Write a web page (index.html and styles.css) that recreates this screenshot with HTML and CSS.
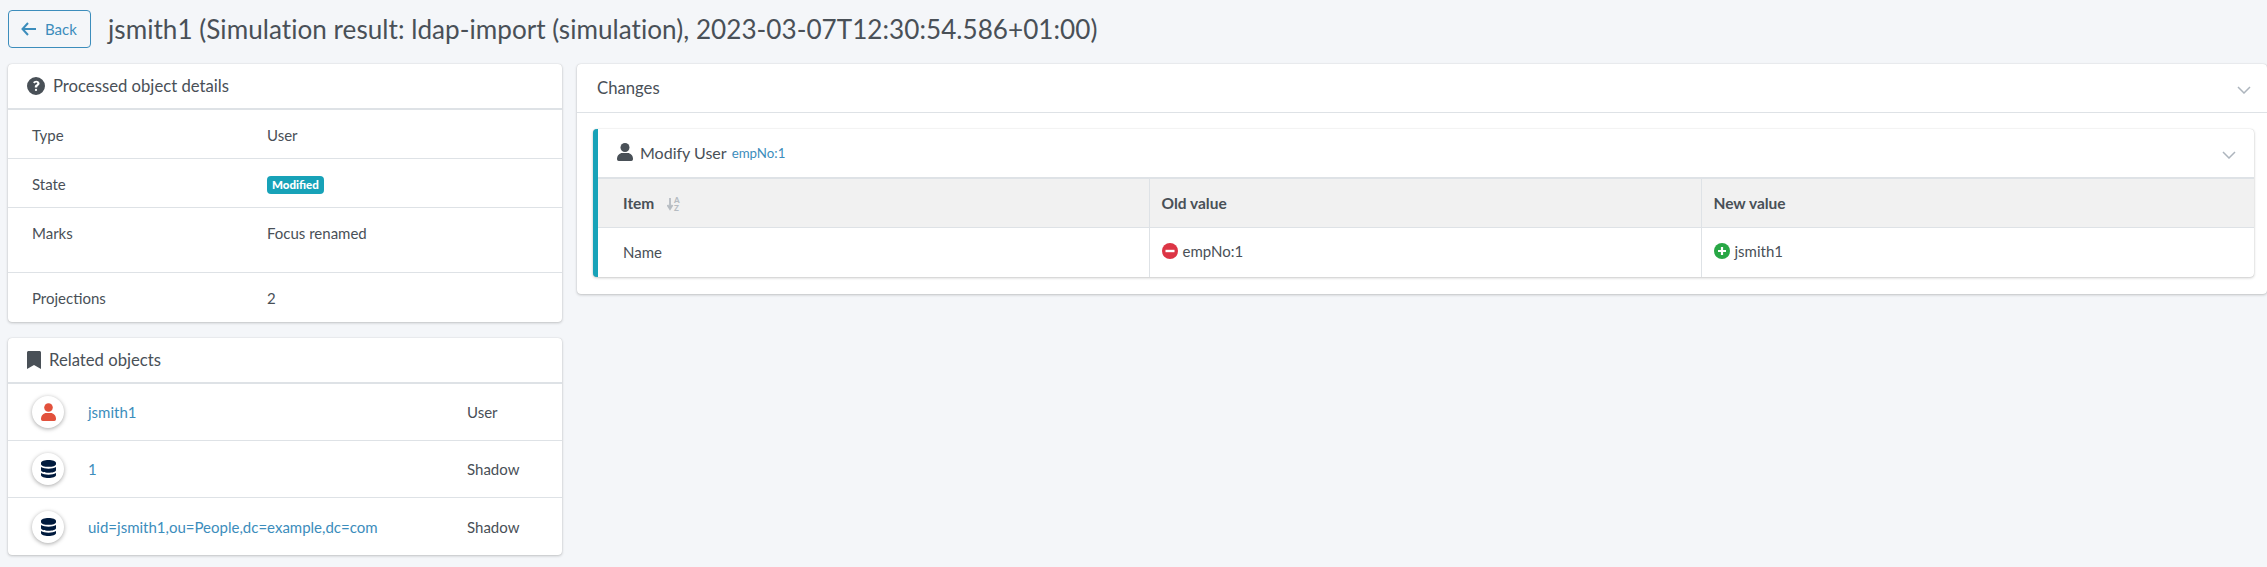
FILE: index.html
```html
<!DOCTYPE html>
<html lang="en">
<head>
<meta charset="UTF-8" />
<title>jsmith1 (Simulation result)</title>
<link rel="stylesheet" href="styles.css">
</head>
<body>
  <header class="page-head">
    <button class="back-btn" type="button">
      <svg class="back-arrow" viewBox="0 0 16 14"><path d="M7 1 1.5 7 7 13M2 7h13" /></svg>
      Back
    </button>
    <h1>jsmith1 (Simulation result: ldap-import (simulation), 2023-03-07T12:30:54.586+01:00)</h1>
  </header>

  <main class="layout">
    <div class="left-col">
      <section class="card">
        <div class="card-head thick">
          <svg class="icon" width="18" height="18" viewBox="0 0 512 512"><path d="M256 0a256 256 0 1 0 0 512 256 256 0 0 0 0-512zm0 400a32 32 0 1 1 0-64 32 32 0 0 1 0 64zm34-112v8h-68v-20c0-34 24-50 44-62 16-10 26-16 26-30 0-16-14-26-32-26-20 0-32 10-42 26l-44-28c18-32 48-52 88-52 48 0 96 32 96 82 0 60-68 66-68 102z" /></svg>
          Processed object details
        </div>
        <div class="detail-row"><span class="detail-key">Type</span><span>User</span></div>
        <div class="detail-row"><span class="detail-key">State</span><span class="badge">Modified</span></div>
        <div class="detail-row tall"><span class="detail-key">Marks</span><span>Focus renamed</span></div>
        <div class="detail-row last"><span class="detail-key">Projections</span><span>2</span></div>
      </section>

      <section class="card">
        <div class="card-head thick">
          <svg class="icon" width="14" height="18" viewBox="0 0 14 18"><path d="M0 1.5C0 .7.7 0 1.500 0h11c.8 0 1.500.7 1.500 1.500V18l-7-4-7 4z" /></svg>
          Related objects
        </div>
        <div class="related-row">
          <span class="avatar user">
            <svg width="15" height="18" viewBox="0 0 15 18"><circle cx="7.500" cy="4.500" r="4.300" /><path d="M0 16c0-3.500 2.500-6 5.500-6h4c3 0 5.500 2.500 5.500 6 0 1-.7 2-1.700 2H1.700C.7 18 0 17 0 16z" /></svg>
          </span>
          <a class="link">jsmith1</a>
          <span class="related-type">User</span>
        </div>
        <div class="related-row">
          <span class="avatar">
            <svg width="15" height="18" viewBox="0 0 15 18"><path d="M0 3c0-2 3.500-3 7.500-3S15 1 15 3v1c0 2-3.500 2.800-7.500 2.800S0 6 0 4zM0 7c2 1.300 4.500 1.700 7.500 1.700S13 8.300 15 7v3c0 1.800-3.500 2.800-7.500 2.800S0 11.800 0 10zM0 13c2 1.300 4.500 1.700 7.500 1.700S13 14.300 15 13v2c0 2-3.500 3-7.500 3S0 17 0 15z" /></svg>
          </span>
          <a class="link">1</a>
          <span class="related-type">Shadow</span>
        </div>
        <div class="related-row last">
          <span class="avatar">
            <svg width="15" height="18" viewBox="0 0 15 18"><path d="M0 3c0-2 3.500-3 7.500-3S15 1 15 3v1c0 2-3.500 2.800-7.500 2.800S0 6 0 4zM0 7c2 1.300 4.500 1.700 7.500 1.700S13 8.300 15 7v3c0 1.800-3.500 2.800-7.500 2.800S0 11.800 0 10zM0 13c2 1.300 4.500 1.700 7.500 1.700S13 14.300 15 13v2c0 2-3.500 3-7.500 3S0 17 0 15z" /></svg>
          </span>
          <a class="link">uid=jsmith1,ou=People,dc=example,dc=com</a>
          <span class="related-type">Shadow</span>
        </div>
      </section>
    </div>

    <section class="card changes">
      <div class="changes-head">
        Changes
        <svg class="chevron" width="14" height="8" viewBox="0 0 14 8"><path d="M1 1l6 6 6-6" /></svg>
      </div>
      <div class="changes-body">
        <div class="delta">
          <div class="delta-head">
            <svg class="icon" width="16" height="18" viewBox="0 0 16 18"><circle cx="8" cy="4.500" r="4.500" /><path d="M0 16c0-3.500 2.500-6 5.500-6h5c3 0 5.500 2.500 5.500 6 0 1-.7 2-1.700 2H1.700C.7 18 0 17 0 16z" /></svg>
            Modify User <a class="link small">empNo:1</a>
            <svg class="chevron" width="14" height="8" viewBox="0 0 14 8"><path d="M1 1l6 6 6-6" /></svg>
          </div>
          <table class="delta-table">
            <thead>
              <tr>
                <th class="col-item">Item
                  <svg class="sort" width="14" height="14" viewBox="0 0 14 14"><path d="M3 1v9M.5 8 3 12l2.500-4" /><text x="7" y="6" class="sort-a">A</text><text x="7" y="13.500" class="sort-a">Z</text></svg>
                </th>
                <th class="col-old">Old value</th>
                <th>New value</th>
              </tr>
            </thead>
            <tbody>
              <tr>
                <td>Name</td>
                <td><span class="change-val">
                  <svg width="16" height="16" viewBox="0 0 16 16"><circle cx="8" cy="8" r="8" fill="#dc3545" /><rect x="3.500" y="6.800" width="9" height="2.400" fill="#fff" /></svg>
                  empNo:1</span></td>
                <td><span class="change-val">
                  <svg width="16" height="16" viewBox="0 0 16 16"><circle cx="8" cy="8" r="8" fill="#28a745" /><path d="M4 8h8M8 4v8" stroke="#fff" stroke-width="2.200" /></svg>
                  jsmith1</span></td>
              </tr>
            </tbody>
          </table>
        </div>
      </div>
    </section>
  </main>
</body>
</html>
```
FILE: styles.css
```css
html, body {
  margin: 0;
  padding: 0;
  overflow: hidden;
}

* {
  box-sizing: border-box;
}

body {
  font-family: Lato, "Noto Sans", sans-serif;
  font-size: 15px;
  color: #495057;
  background-color: #f4f6f9;
  height: 567px;
}

.page-head {
  display: flex;
  align-items: flex-start;
  gap: 17px;
  padding: 10px 0 0 8px;
  height: 64px;
}

.page-head h1 {
  margin: 0;
  font-size: 26.1px;
  font-weight: 400;
  letter-spacing: .035px;
  line-height: 38px;
  white-space: nowrap;
}

.back-btn {
  display: flex;
  align-items: center;
  gap: 8px;
  width: 83px;
  height: 38px;
  padding: 0 0 0 12px;
  font: inherit;
  color: #3c8dbc;
  background: transparent;
  border: 1px solid #3c8dbc;
  border-radius: 4px;
}

.back-arrow {
  width: 16px;
  height: 14px;
  fill: none;
  stroke: #3c8dbc;
  stroke-width: 2;
}

.layout {
  display: grid;
  grid-template-columns: 554px 1fr;
  column-gap: 15px;
  padding-left: 8px;
  align-items: start;
}

.left-col {
  display: flex;
  flex-direction: column;
  gap: 16px;
}

.card {
  background-color: #fff;
  border-radius: 4px;
  box-shadow: 0 0 1px rgba(0, 0, 0, .2), 0 1px 3px rgba(0, 0, 0, .2);
}

.card-head {
  display: flex;
  align-items: center;
  gap: 8px;
  height: 46px;
  padding: 0 19px;
  font-size: 16.7px;
}

.card-head.thick {
  border-bottom: 2px solid #dee2e6;
}

.icon {
  fill: #495057;
  flex: none;
}

.detail-row {
  display: flex;
  align-items: flex-start;
  height: 49px;
  padding-top: 15px;
  line-height: 20px;
  border-bottom: 1px solid #dee2e6;
}

.detail-row.tall {
  height: 65px;
}

.detail-row.last {
  border-bottom: none;
}

.detail-key {
  width: 259px;
  padding-left: 24px;
  flex: none;
}

.badge {
  margin-top: 2px;
  padding: 0 5px;
  font-size: 11.5px;
  font-weight: 900;
  line-height: 18px;
  color: #fff;
  background-color: #17a2b8;
  border-radius: 4px;
}

.related-row {
  display: flex;
  align-items: center;
  height: 57px;
  padding-left: 24px;
  border-bottom: 1px solid #dee2e6;
}

.related-row.last {
  border-bottom: none;
}

.avatar {
  display: flex;
  align-items: center;
  justify-content: center;
  width: 32px;
  height: 32px;
  flex: none;
  border-radius: 50%;
  background-color: #fff;
  box-shadow: 0 1px 4px rgba(0, 0, 0, .35);
  fill: #001a3d;
}

.avatar.user {
  fill: #e2513c;
}

.link {
  color: #3c8dbc;
}

.related-row .link {
  width: 379px;
  margin-left: 24px;
  flex: none;
}

.related-type {
  white-space: nowrap;
}

.changes {
  height: 230px;
}

.changes-head {
  display: flex;
  align-items: center;
  justify-content: space-between;
  height: 49px;
  padding: 0 16px 0 20px;
  font-size: 16.7px;
  border-bottom: 1px solid #dee2e6;
}

.chevron {
  margin-top: 4px;
  fill: none;
  stroke: #adb5bd;
  stroke-width: 1.500;
  flex: none;
}

.changes-body {
  padding: 16px 13px 0 16px;
}

.delta {
  background-color: #fff;
  border-left: 5px solid #17a2b8;
  border-radius: 4px;
  box-shadow: 0 0 1px rgba(0, 0, 0, .2), 0 1px 3px rgba(0, 0, 0, .2);
  overflow: hidden;
}

.delta-head {
  display: flex;
  align-items: center;
  gap: 6px;
  height: 50px;
  padding: 0 18px 2px 19px;
  font-size: 16px;
  border-bottom: 2px solid #dee2e6;
}

.delta-head .icon {
  margin-right: 1px;
}

.delta-head .chevron {
  margin-left: auto;
  margin-top: 6px;
}

.small {
  font-size: 13.3px;
  margin-top: 2px;
  margin-left: -1px;
}

.delta-table {
  width: 100%;
  border-collapse: collapse;
  table-layout: fixed;
}

.delta-table th, .delta-table td {
  height: 50px;
  padding: 0 12px;
  text-align: left;
  border-right: 1px solid #dee2e6;
}

.delta-table th:last-child, .delta-table td:last-child {
  border-right: none;
}

.delta-table th {
  height: 48px;
  font-size: 15.5px;
  font-weight: 700;
  background-color: #f1f1f1;
  border-bottom: 1px solid #dee2e6;
}

.delta-table .col-item {
  width: 551px;
  padding-left: 25px;
}

.delta-table td:first-child {
  padding-left: 25px;
}

.delta-table .col-old {
  width: 552px;
}

.sort {
  margin-left: 9px;
  vertical-align: -2px;
  fill: none;
  stroke: #b6bcc2;
  stroke-width: 1.800;
}

.sort-a {
  font-size: 8px;
  font-weight: 900;
  fill: #b6bcc2;
  stroke: none;
}

.change-val {
  display: inline-flex;
  align-items: center;
  gap: 5px;
}
```
